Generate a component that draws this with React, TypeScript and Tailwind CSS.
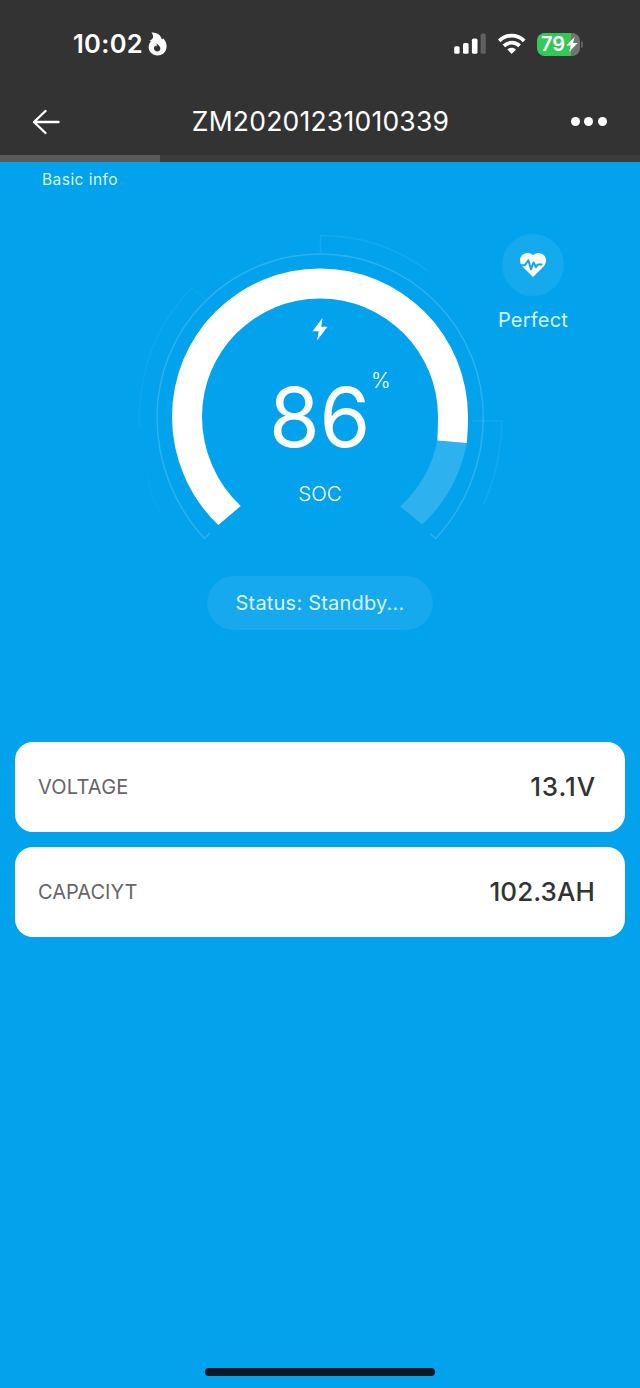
const readings = [
  { label: 'VOLTAGE', value: '13.1V', labelClass: 'tracking-[0.2px]', valueClass: 'tracking-[0.9px] -mr-px' },
  { label: 'CAPACIYT', value: '102.3AH', labelClass: 'tracking-[0px]', valueClass: 'tracking-[0.1px]' },
]

function StatusBar() {
  return (
    <div className="flex h-[88px] items-center justify-between pl-[73px] pr-[57px]">
      <div className="flex items-center gap-[5px]">
        <span className="text-[25.5px] font-semibold leading-8 tracking-[0.3px]">10:02</span>
        <svg width="19" height="25" viewBox="0 0 19 25" fill="none">
          <path
            d="M3.4 .6C9 .2 13 3.2 13.8 7.6C14.4 7.2 14.9 6.8 15.3 6.2C17.6 8.6 18.6 11.6 18.6 14.4C18.6 19.6 14.6 23.4 9.6 23.4C4.4 23.4 .7 19.8 .7 15.2C.7 12.8 1.6 10.8 3 9L1.2 8.8C3 8.2 4.6 7.2 5 5.6C5.3 4 4.8 2 3.4 .6Z"
            fill="white"
          />
          <path
            d="M8.6 10.4C9 12.6 12.4 13.8 12.4 16.4C12.4 18.2 11 19.4 9.3 19.4C7.5 19.4 6 18.2 6 16.5C6 15.2 6.6 14.3 7.2 13.6C7.6 14.2 7.9 14.4 8.4 14.4C8.9 13.2 8.9 12 8.6 10.4Z"
            fill="#333333"
          />
        </svg>
      </div>

      <div className="flex items-center">
        <svg width="33" height="22" viewBox="0 0 33 22" fill="white">
          <rect x="1.2" y="13.2" width="5.4" height="7.6" rx="1.6" />
          <rect x="10" y="10" width="5.6" height="10.8" rx="1.6" />
          <rect x="18.9" y="5.6" width="5.6" height="15.2" rx="1.6" />
          <rect x="27.6" y="0.6" width="5.2" height="20.2" rx="1.6" fill="#606060" />
        </svg>
        <svg className="ml-[11px]" width="29" height="22" viewBox="0 0 29 22" fill="none" stroke="white">
          <path d="M2.2 7.8C9.2 .9 20.2 .9 27.2 7.8" strokeWidth="3.8" />
          <path d="M6.8 12.9C11.4 8.6 18 8.6 22.6 12.9" strokeWidth="3.8" />
          <path d="M10.4 16.6C13 14.2 16.4 14.2 19 16.6L14.7 21Z" fill="white" stroke="none" />
        </svg>
        <div className="relative ml-[11px] flex h-[23px] w-[43px] items-center overflow-hidden rounded-[8px] bg-[#737373]">
          <div className="h-full w-[34px] bg-[#34c759]" />
          <span className="absolute left-[4px] text-[20px] font-semibold leading-[23px]">79</span>
          <svg className="absolute left-[29px] top-[4px]" width="12" height="15" viewBox="0 0 12 15" fill="white">
            <path d="M8.6 0L.4 8.5H4.8L3.2 15L11.6 6.1H7Z" />
          </svg>
        </div>
        <div className="ml-px h-[7px] w-[2px] rounded-r-full bg-[#606060]" />
      </div>
    </div>
  )
}

function NavBar() {
  return (
    <div className="flex h-[67px] items-center justify-between px-8">
      <svg width="38" height="28" viewBox="0 0 38 28" fill="none" stroke="white" strokeWidth="2.4" strokeLinecap="round" strokeLinejoin="round">
        <path d="M13.5 3L2 14L13.5 25M2 14H26.5" />
      </svg>
      <h1 className="pb-px text-[26.5px] leading-8 tracking-[0.22px]">ZM20201231010339</h1>
      <div className="flex w-[37px] gap-[4.5px]">
        <span className="h-[9px] w-[9px] rounded-full bg-white" />
        <span className="h-[9px] w-[9px] rounded-full bg-white" />
        <span className="h-[9px] w-[9px] rounded-full bg-white" />
      </div>
    </div>
  )
}

function Gauge() {
  return (
    <div className="relative h-[320px] w-[400px]">
      {/* origin matches the page so the ring sits around 320,416.5 */}
      <svg width="400" height="320" viewBox="120 230 400 320" fill="none">
        <path
          d="M437.3 440.5L466.8 443A150 150 0 0 1 422.3 524.5L400.2 506.5A122 122 0 0 0 437.3 440.5Z"
          fill="white"
          fillOpacity="0.17"
        />
        <path
          d="M218.3 525A150.3 150.3 0 0 1 172 416.5A148 148 0 0 1 468 416.5Q468 430 466.8 443L437.3 440.5Q438 429 438 416.5A118 118 0 0 0 202 416.5A122.9 122.9 0 0 0 240.7 506Z"
          fill="white"
        />
        <g stroke="white" strokeWidth="1.5">
          <path d="M210 533L204.5 538.5A179 179 0 0 1 157 417A163.2 163.2 0 0 1 320 254A163.2 163.2 0 0 1 483.3 417A179 179 0 0 1 435.8 538.5L430 533.5" opacity="0.17" />
          <path d="M320.5 253V235.5C360 235.5 397 248 428 271" opacity="0.08" />
          <path d="M206 300L192 288C158 321 138 370 139 427" opacity="0.05" />
          <path d="M472 421H502C501 452 495 480 483 505" opacity="0.07" />
          <path d="M147 474C150 490 154 502 160 512" opacity="0.03" />
        </g>
        <path d="M322.5 318L312.5 331.2H318.8L317 340.5L327.5 326.8H321.2Z" fill="white" />
      </svg>
      <span className="absolute left-[149px] top-[138px] text-[82px] leading-[100px] tracking-[-0.2px]">86</span>
      <span className="absolute left-[251px] top-[139px] text-[21px] font-light leading-6">%</span>
      <span className="absolute left-0 top-[252px] w-full text-center text-[20.5px] font-light leading-6">SOC</span>
    </div>
  )
}

export default function App() {
  return (
    <div className="flex h-[1388px] w-[640px] flex-col bg-[#03a2ec] font-['Inter',sans-serif] text-white">
      <header className="bg-[#333333]">
        <StatusBar />
        <NavBar />
        <div className="h-[7px] bg-[#3c3c3c]">
          <div className="h-full w-1/4 bg-[#5a5a5a]" />
        </div>
      </header>

      <main className="relative flex flex-1 flex-col items-center">
        <p className="h-[68px] w-full pl-[42px] pt-[6px] text-[15.5px] leading-6 tracking-[0.45px] text-[#d9f4ff]">Basic info</p>
        <Gauge />

        {/* battery health */}
        <div className="absolute right-[72px] top-[72px] flex w-[70px] flex-col items-center">
          <div className="flex h-[62px] w-[62px] items-center justify-center rounded-full bg-white/7">
            <svg width="26" height="24" viewBox="0 0 26 24" fill="none">
              <path
                d="M13 24L2.2 13.2C-.6 10.2-.6 5.4 1.8 2.6C4.8-.8 10-.8 13 2.2C16-.8 21.2-.8 24.2 2.6C26.6 5.4 26.6 10.2 23.8 13.2Z"
                fill="white"
              />
              <path
                d="M0 12.2H5L8.3 7.2L11 16.2L13.6 9.4L15.8 14.2L17.6 11.6H21.6"
                stroke="#12a5ec"
                strokeWidth="2"
                strokeLinejoin="round"
                strokeLinecap="round"
              />
            </svg>
          </div>
          <span className="mt-3 text-[20px] leading-6 tracking-[0.2px] text-[#d9f4ff]">Perfect</span>
        </div>

        <div className="mt-[26px] flex h-[54px] w-[226px] items-center justify-center rounded-full bg-white/8 text-[20px] tracking-[0.2px] text-[#d9f4ff]">
          Status: Standby...
        </div>

        <div className="mt-28 flex w-full flex-col gap-[15px] px-[15px]">
          {readings.map((r) => (
            <div key={r.label} className="flex h-[90px] items-center justify-between rounded-[18px] bg-white pl-[23px] pr-[30px]">
              <span className={`text-[20px] text-[#666666] ${r.labelClass}`}>{r.label}</span>
              <span className={`pb-px text-[26px] font-medium text-[#333333] ${r.valueClass}`}>{r.value}</span>
            </div>
          ))}
        </div>

        <div className="mb-[12px] mt-auto h-[8px] w-[230px] rounded-full bg-[#0d1a24]" />
      </main>
    </div>
  )
}
